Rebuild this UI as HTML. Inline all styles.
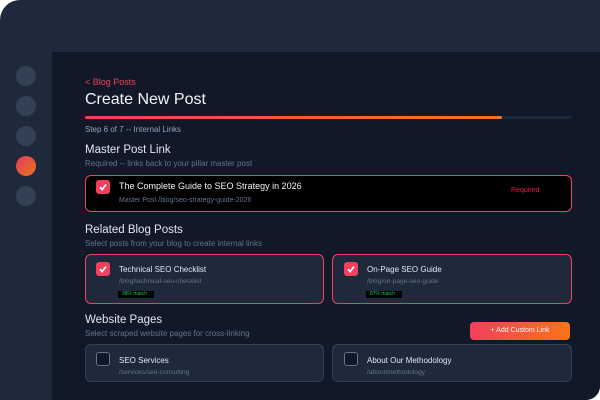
<!DOCTYPE html>
<html><head><style>
*{margin:0;padding:0;box-sizing:border-box}
body{width:600px;height:400px;background:#fff;font-family:"Liberation Sans",sans-serif;position:relative;overflow:hidden}
.frame{position:absolute;left:0;top:0;width:600px;height:400px;background:#1e293b;border-radius:20px 0 14px 0}
.panel{position:absolute;left:52px;top:52px;width:548px;height:348px;background:#111827;border-bottom-right-radius:14px}
.dot{position:absolute;left:16px;width:20px;height:20px;border-radius:50%;background:#334155}
.t{position:absolute;white-space:nowrap}
.card{position:absolute;border-radius:6px}
.cb{position:absolute;width:14px;height:14px;border-radius:3px;background:#f43f5e}
.cb svg{position:absolute;left:2px;top:2px}
.cbo{position:absolute;width:14px;height:14px;border-radius:3px;border:1px solid #64748b;background:#111827}
.badge{position:absolute;height:7px;background:#000;border-radius:1px;color:#22c55e;font-size:5px;line-height:7px;padding-left:4px}
</style></head><body>
<div class="frame"></div>
<div class="dot" style="top:66px"></div>
<div class="dot" style="top:96px"></div>
<div class="dot" style="top:126px"></div>
<div class="dot" style="top:156px;background:linear-gradient(135deg,#e23d5c,#e8731f)"></div>
<div class="dot" style="top:186px"></div>
<div class="panel"></div>
<div class="t" style="left:85px;top:77px;font-size:9px;color:#f43f5e">&lt; Blog Posts</div>
<div class="t" style="left:85px;top:91px;font-size:16px;color:#f1f5f9">Create New Post</div>
<div style="position:absolute;left:85px;top:116px;width:487px;height:3px;background:#1e293b;border-radius:2px"></div>
<div style="position:absolute;left:85px;top:116px;width:417px;height:3px;background:linear-gradient(90deg,#f43f5e,#f97316);border-radius:2px"></div>
<div class="t" style="left:85px;top:125px;font-size:8px;color:#94a3b8">Step 6 of 7 -- Internal Links</div>
<div class="t" style="left:85px;top:144px;font-size:11.5px;color:#e2e8f0">Master Post Link</div>
<div class="t" style="left:85px;top:159px;font-size:8px;color:#64748b">Required -- links back to your pillar master post</div>
<div class="card" style="left:85px;top:175px;width:487px;height:37px;background:#000;border:1px solid #f43f5e"></div>
<div class="cb" style="left:96px;top:180px"><svg width="10" height="10" viewBox="0 0 10 10"><path d="M2 5.2L4.2 7.5 8 2.5" stroke="#fff" stroke-width="1.8" fill="none"/></svg></div>
<div class="t" style="left:119px;top:181px;font-size:9px;color:#f1f5f9">The Complete Guide to SEO Strategy in 2026</div>
<div class="t" style="left:119px;top:197px;font-size:7px;color:#64748b">Master Post /blog/seo-strategy-guide-2026</div>
<div class="t" style="left:511px;top:187px;font-size:7px;color:#e11d48">Required</div>
<div class="t" style="left:85px;top:224px;font-size:11.5px;color:#e2e8f0">Related Blog Posts</div>
<div class="t" style="left:85px;top:239px;font-size:8px;color:#64748b">Select posts from your blog to create internal links</div>
<div class="card" style="left:85px;top:254px;width:239px;height:50px;background:#1e293b;border:1px solid #f43f5e"></div>
<div class="cb" style="left:96px;top:262px"><svg width="10" height="10" viewBox="0 0 10 10"><path d="M2 5.2L4.2 7.5 8 2.5" stroke="#fff" stroke-width="1.8" fill="none"/></svg></div>
<div class="t" style="left:119px;top:265px;font-size:8px;color:#e2e8f0">Technical SEO Checklist</div>
<div class="t" style="left:119px;top:278px;font-size:6.6px;color:#64748b">/blog/technical-seo-checklist</div>
<div class="badge" style="left:118px;top:291px;width:36px">98% match</div>
<div class="card" style="left:332px;top:254px;width:240px;height:50px;background:#1e293b;border:1px solid #f43f5e"></div>
<div class="cb" style="left:344px;top:262px"><svg width="10" height="10" viewBox="0 0 10 10"><path d="M2 5.2L4.2 7.5 8 2.5" stroke="#fff" stroke-width="1.8" fill="none"/></svg></div>
<div class="t" style="left:367px;top:265px;font-size:8px;color:#e2e8f0">On-Page SEO Guide</div>
<div class="t" style="left:367px;top:278px;font-size:6.6px;color:#64748b">/blog/on-page-seo-guide</div>
<div class="badge" style="left:366px;top:291px;width:36px">87% match</div>
<div class="t" style="left:85px;top:314px;font-size:11.5px;color:#e2e8f0">Website Pages</div>
<div class="t" style="left:85px;top:329px;font-size:8px;color:#64748b">Select scraped website pages for cross-linking</div>
<div style="position:absolute;left:470px;top:322px;width:100px;height:18px;border-radius:4px;background:linear-gradient(90deg,#f43f5e,#f97316);color:#fff;font-size:7px;line-height:18px;text-align:center">+ Add Custom Link</div>
<div class="card" style="left:85px;top:344px;width:239px;height:38px;background:#1e293b;border:1px solid #334155"></div>
<div class="cbo" style="left:96px;top:352px"></div>
<div class="t" style="left:119px;top:356px;font-size:8px;color:#e2e8f0">SEO Services</div>
<div class="t" style="left:119px;top:369px;font-size:6.6px;color:#64748b">/services/seo-consulting</div>
<div class="card" style="left:332px;top:344px;width:240px;height:38px;background:#1e293b;border:1px solid #334155"></div>
<div class="cbo" style="left:344px;top:352px"></div>
<div class="t" style="left:367px;top:356px;font-size:8px;color:#e2e8f0">About Our Methodology</div>
<div class="t" style="left:367px;top:369px;font-size:6.6px;color:#64748b">/about/methodology</div>
</body></html>
